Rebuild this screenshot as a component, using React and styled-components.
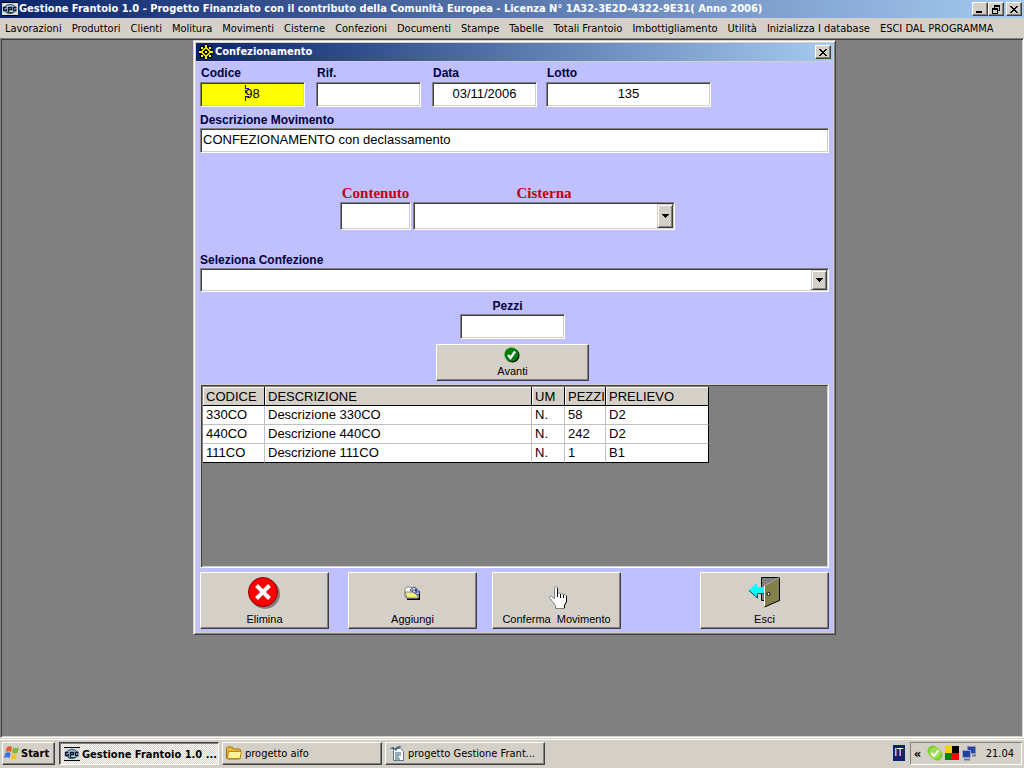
import React from 'react';
import styled, { createGlobalStyle } from 'styled-components';

const GlobalStyle = createGlobalStyle`
    * {
        box-sizing: border-box;
    }
    body {
        margin: 0;
        background: #808080;
        color: #000;
        font-family: 'DejaVu Sans Condensed', 'DejaVu Sans', sans-serif;
        font-size: 11px;
    }
    button, input, select {
        margin: 0;
        padding: 0;
        border-radius: 0;
        color: inherit;
        font: inherit;
    }
    svg {
        display: block;
        flex: none;
    }
`;

const Screen = styled.div`
    display: flex;
    flex-direction: column;
    min-height: 100vh;
`;

const TitleBar = styled.header`
    display: flex;
    align-items: center;
    gap: 1px;
    height: 18px;
    padding: 0 2px;
    background: linear-gradient(to right, #0a246a, #a6caf0);
    color: #fff;
`;

const TitleText = styled.h1`
    flex: 1;
    min-width: 0;
    margin: 0;
    overflow: hidden;
    font-size: 11px;
    font-weight: bold;
    line-height: 16px;
    white-space: nowrap;
`;

const CaptionButtons = styled.div`
    display: flex;
    button:last-child {
        margin-left: 2px;
    }
`;

const CaptionButton = styled.button`
    display: flex;
    align-items: center;
    justify-content: center;
    width: 16px;
    height: 14px;
    border: 1px solid;
    border-color: #fff #404040 #404040 #fff;
    background: #d4d0c8;
    box-shadow: inset -1px -1px #808080;
`;

const MenuBar = styled.nav`
    display: flex;
    align-items: center;
    gap: 10px;
    height: 20px;
    padding: 1px 5px 0;
    background: #d4d0c8;
    a {
        color: #000;
        line-height: 16px;
        text-decoration: none;
        white-space: nowrap;
    }
`;

const Workspace = styled.main`
    flex: 1;
    border: 1px solid;
    border-color: #808080 #fff #fff #808080;
    box-shadow: inset 1px 1px #404040, inset -1px -1px #d4d0c8;
    padding: 1px;
    background: #808080;
`;

const Dialog = styled.section`
    width: 643px;
    max-width: 100%;
    margin-left: 191px;
    padding: 2px;
    border: 1px solid;
    border-color: #d4d0c8 #404040 #404040 #d4d0c8;
    box-shadow: inset 1px 1px #fff, inset -1px -1px #808080;
    background: #d4d0c8;
`;

const Form = styled.form`
    display: flex;
    flex-direction: column;
    margin-top: 1px;
    padding: 4px 4px 3px;
    background: #c0c0ff;
    font-family: 'Liberation Sans', Arial, sans-serif;
`;

const FieldRow = styled.div`
    display: grid;
    grid-template-columns: 116px 116px 114px 165px;
`;

const Field = styled.div`
    display: flex;
    flex-direction: column;
    gap: ${props => (props.$small ? '2px' : '1px')};
    width: ${props => (props.$small ? '105px' : 'auto')};
    margin-top: ${props => props.$space || 0}px;
`;

const Label = styled.label`
    padding-left: ${props => (props.$indent ? '1px' : 0)};
    color: #000040;
    font-size: 12px;
    font-weight: bold;
    line-height: 14px;
`;

const sunken = `
    border: 1px solid;
    border-color: #808080 #fff #fff #808080;
    box-shadow: inset 1px 1px #404040, inset -1px -1px #d4d0c8;
`;

const TextBox = styled.input`
    ${sunken}
    width: 100%;
    height: ${props => props.$height || 25}px;
    padding: 0 2px 2px;
    background: ${props => (props.$active ? '#ffff00' : '#fff')};
    font-size: 13px;
    text-align: ${props => (props.$center ? 'center' : 'left')};
    outline: none;
`;

const LotField = styled(Field)`
    gap: 2px;
`;

const CaretBox = styled.div`
    position: relative;
    svg {
        position: absolute;
        left: 45px;
        top: 3px;
    }
`;

const Combo = styled.div`
    ${sunken}
    display: flex;
    height: ${props => props.$height}px;
    padding: 1px;
    background: #fff;
`;

const ComboSelect = styled.select`
    flex: 1;
    min-width: 0;
    border: 0;
    background: transparent;
    font-size: 13px;
    appearance: none;
    outline: none;
`;

const ComboArrow = styled.span`
    display: flex;
    align-items: center;
    justify-content: center;
    width: 16px;
    border: 1px solid;
    border-color: #d4d0c8 #404040 #404040 #d4d0c8;
    background: #d4d0c8;
    box-shadow: inset 1px 1px #fff, inset -1px -1px #808080;
`;

const SourceRow = styled.div`
    display: grid;
    grid-template-columns: 71px 262px;
    justify-content: center;
    column-gap: 2px;
    margin: 31px 0 23px;
    padding-right: 14px;
`;

const SourceLabel = styled.label`
    display: block;
    color: #c00010;
    font-family: 'Liberation Serif', 'Times New Roman', serif;
    font-size: 15px;
    font-weight: bold;
    line-height: 18px;
    text-align: center;
`;

const Pieces = styled.div`
    display: flex;
    flex-direction: column;
    align-items: center;
    gap: 5px;
    margin: 7px 0 3px;
    padding-right: 4px;
`;

const PiecesField = styled(Field)`
    width: 105px;
    label {
        padding-right: 10px;
        text-align: center;
    }
`;

const PushButton = styled.button`
    display: flex;
    flex-direction: column;
    align-items: center;
    justify-content: center;
    gap: ${props => (props.$wide ? '1px' : '2px')};
    width: ${props => (props.$wide ? '153px' : '129px')};
    height: ${props => (props.$wide ? '37px' : '57px')};
    border: 1px solid;
    border-color: #fff #404040 #404040 #fff;
    background: #d4d0c8;
    box-shadow: inset -1px -1px #808080;
    font-size: 11px;
    line-height: 14px;
    white-space: pre;
`;

const GridPanel = styled.div`
    height: 184px;
    padding: 1px;
    border: 1px solid;
    border-color: #d4d0c8 #fff #fff #d4d0c8;
    background: #808080;
    box-shadow: inset 1px 1px #404040, inset -1px -1px #d4d0c8;
    overflow: hidden;
`;

const DataTable = styled.table`
    width: 506px;
    margin: 1px;
    border-collapse: separate;
    border-spacing: 0;
    table-layout: fixed;
    font-size: 13px;
    line-height: 16px;
    th, td {
        height: 19px;
        padding: 1px 0 1px 3px;
        border-right: 1px solid #c0c0c0;
        border-bottom: 1px solid #c0c0c0;
        background: #fff;
        font-weight: normal;
        overflow: hidden;
        text-align: left;
        white-space: nowrap;
    }
    th {
        padding: 2px 0 0 3px;
        border-color: #000;
        background: #d4d0c8;
        box-shadow: inset 1px 1px #fff;
    }
    td:last-child {
        border-right-color: #000;
    }
    tr:last-child td {
        border-bottom-color: #000;
    }
`;

const Actions = styled.div`
    display: grid;
    grid-template-columns: 148px 144px 129px 1fr;
    margin-top: 4px;
    button:last-child {
        justify-self: end;
    }
`;

const Taskbar = styled.footer`
    display: flex;
    align-items: center;
    gap: 3px;
    height: 30px;
    padding: 2px 2px 3px;
    border-top: 1px solid #d4d0c8;
    background: #d4d0c8;
    box-shadow: inset 0 1px #fff;
`;

const TaskButton = styled.button`
    display: flex;
    align-items: center;
    gap: ${props => (props.$active ? '2px' : '3px')};
    flex: 0 1 160px;
    min-width: 0;
    height: 23px;
    padding: ${props => (props.$active ? '2px 0 0 4px' : '0 3px')};
    border: 1px solid;
    border-color: ${props => (props.$active ? '#404040 #fff #fff #404040' : '#fff #404040 #404040 #fff')};
    background: ${props => (props.$active ? 'repeating-conic-gradient(#fff 0 25%, #d4d0c8 0 50%) 0 0 / 2px 2px' : '#d4d0c8')};
    box-shadow: ${props => (props.$active ? 'inset 1px 1px #808080' : 'inset -1px -1px #808080')};
    font-weight: ${props => (props.$active ? 'bold' : 'normal')};
    text-align: left;
    white-space: nowrap;
`;

const StartButton = styled(TaskButton)`
    flex: none;
    gap: 1px;
    width: 53px;
    margin-right: 1px;
    padding: 0 1px;
    font-weight: bold;
`;

const Language = styled.span`
    width: 12px;
    margin: 0 2px 0 auto;
    background: #0a246a;
    color: #fff;
    line-height: 16px;
    text-align: center;
`;

const Tray = styled.div`
    display: flex;
    align-items: center;
    gap: 2px;
    height: 23px;
    padding: 0 7px 0 3px;
    border: 1px solid;
    border-color: #808080 #fff #fff #808080;
    time {
        margin-left: 7px;
    }
`;

const Chevrons = styled.span`
    width: 11px;
    font-size: 13px;
    font-weight: bold;
`;

const menus = [
    'Lavorazioni',
    'Produttori',
    'Clienti',
    'Molitura',
    'Movimenti',
    'Cisterne',
    'Confezioni',
    'Documenti',
    'Stampe',
    'Tabelle',
    'Totali Frantoio',
    'Imbottigliamento',
    'Utilità',
    'Inizializza I database',
    'ESCI DAL PROGRAMMA',
];

const columns = [
    { name: 'CODICE', width: 62 },
    { name: 'DESCRIZIONE', width: 267 },
    { name: 'UM', width: 33 },
    { name: 'PEZZI', width: 41 },
    { name: 'PRELIEVO', width: 103 },
];

const rows = [
    ['330CO', 'Descrizione 330CO', 'N.', '58', 'D2'],
    ['440CO', 'Descrizione 440CO', 'N.', '242', 'D2'],
    ['111CO', 'Descrizione 111CO', 'N.', '1', 'B1'],
];

const AppIcon = () => (
    <svg width='16' height='16' viewBox='0 0 16 16'>
        <path d='M0 2h16v12H0z' fill='#dcdcd8' />
        <path d='M0 1h16v1H0zM0 14h16v1H0z' fill='#000' />
        <ellipse cx='8' cy='8' rx='6' ry='4.500' fill='#a8c8d0' stroke='#1c4c90' />
        <path d='M4.500 6.500h-3v3h3V8M6.500 11V6.500h3v2h-3M14.500 6.500h-3v3h3' stroke='#101830' strokeWidth='1.300' fill='none' />
        <path d='M5 11.500h6' stroke='#305020' fill='none' />
    </svg>
);

const FormIcon = () => (
    <svg width='16' height='16' viewBox='0 0 16 16'>
        <path d='M8 0l3 2h3v3l2 3-2 3v3h-3l-3 2-3-2H2v-3L0 8l2-3V2h3z' fill='#000' />
        <path d='M8 3.500L12.500 8 8 12.500 3.500 8z' fill='none' stroke='#ffff00' strokeWidth='1.500' />
        <path
            d='M7 1h2v2H7zM7 13h2v2H7zM1 7h2v2H1zM13 7h2v2h-2zM3 3h2v2H3zM11 3h2v2h-2zM3 11h2v2H3zM11 11h2v2h-2zM7 7h2v2H7z'
            fill='#ffff00'
        />
    </svg>
);

const CloseGlyph = () => (
    <svg width='8' height='7' viewBox='0 0 8 7' shapeRendering='crispEdges'>
        <path d='M0 0h2v1h1v1h2V1h1V0h2v1H7v1H6v1H5v1h1v1h1v1h1v1H6V6H5V5H3v1H2v1H0V6h1V5h1V4h1V3H2V2H1V1H0z' />
    </svg>
);

const MinimizeGlyph = () => (
    <svg width='8' height='8' viewBox='0 0 8 8'>
        <path d='M0 6h6v2H0z' />
    </svg>
);

const RestoreGlyph = () => (
    <svg width='9' height='9' viewBox='0 0 9 9' shapeRendering='crispEdges'>
        <path d='M2 0h6v6H6V5h1V2H3v1H2zM0 3h6v6H0zM1 5v3h4V5z' fillRule='evenodd' />
    </svg>
);

const DownGlyph = () => (
    <svg width='7' height='4' viewBox='0 0 7 4' shapeRendering='crispEdges'>
        <path d='M0 0h7v1H6v1H5v1H4v1H3V3H2V2H1V1H0z' />
    </svg>
);

const CheckIcon = () => (
    <svg width='17' height='16' viewBox='0 0 17 16'>
        <circle cx='8.500' cy='8.500' r='7' fill='#000' />
        <circle cx='7.500' cy='7.500' r='7' fill='#008000' />
        <path d='M4 8l2.500 3L11 4.500' fill='none' stroke='#fff' strokeWidth='2.400' />
    </svg>
);

const DeleteIcon = () => (
    <svg width='34' height='34' viewBox='1 0 34 34'>
        <circle cx='18' cy='18' r='15' fill='#808080' />
        <circle cx='16' cy='16' r='14.500' fill='#ff0000' stroke='#800000' />
        <path d='M9.500 9.500l13 13M22.500 9.500l-13 13' stroke='#fff' strokeWidth='4' />
    </svg>
);

const FolderIcon = () => (
    <svg width='34' height='34' viewBox='1 0 34 34'>
        <path d='M12 22h12v-7h1v9H12z' fill='#000' />
        <path d='M10 13l2-2h4l1 1h4l2 3v7H11l-1-2z' fill='#fff' stroke='#808080' />
        <path d='M10 16h11l2 6H12z' fill='#f4f080' stroke='#808080' />
        <path d='M15 14l4-3 6 5-2 3z' fill='#fff' stroke='#404040' />
        <path d='M17 14h4v3M21 13v3h3' stroke='#0020c0' fill='none' />
    </svg>
);

const HandIcon = () => (
    <svg width='34' height='34' viewBox='1 0 34 34'>
        <path
            d='M15.500 11.500q1.500-2 3 0v6q1.500-1.500 3 0.500 1.500-1 3 0.500 1.500-0.500 3 1v6l-2 4v3h-9v-3l-3-4-3-4q0-2.500 3-0.500l2 2z'
            fill='#fff'
            stroke='#808080'
        />
        <path d='M18.500 12v9M21.500 18v4M24.500 19v3M27.500 20v6l-2 3v3' stroke='#000' fill='none' />
    </svg>
);

const DoorIcon = () => (
    <svg width='34' height='34' viewBox='1 -1 34 34'>
        <path d='M14.500 0.500h18v23h-18z' fill='#808080' stroke='#000' />
        <path d='M17.500 8.500l15-8v23l-15 6.500z' fill='#84804c' stroke='#000' />
        <path d='M17.500 8.500l15-8' stroke='#d4d0c8' />
        <path d='M17.500 8.500v21' stroke='#fff' />
        <path d='M17 10h-7V6l-8.500 7.500L10 21v-5h7z' fill='#00ffff' />
        <path d='M17 16.500h-6.500V21L2 13.500' fill='none' stroke='#004040' />
        <circle cx='21.500' cy='17' r='1.500' fill='#fff' stroke='#000' />
    </svg>
);

const WindowsIcon = () => (
    <svg width='16' height='16' viewBox='0 0 16 16'>
        <path d='M3 2q3-1.500 5 0L7 7Q5 5.500 1.500 7z' fill='#e8562a' />
        <path d='M9 2.500q3 1.500 6 0L13.500 8Q11 9 8 7.500z' fill='#7cb83c' />
        <path d='M1.300 8q3-1.500 5.400 0L5.500 13Q3 11.500 0 13z' fill='#3c70d8' />
        <path d='M7.700 8.500q3 1.500 5.500 0.500L12 14q-3 1-5.500-0.500z' fill='#f6c430' />
    </svg>
);

const DirectoryIcon = () => (
    <svg width='16' height='16' viewBox='0 0 16 16'>
        <path d='M0.500 3.500l1-1.500h4.500l1.500 2h6l1 1v8l-1 1h-12l-1-1z' fill='#e8b830' stroke='#a07010' />
        <path d='M2.500 6.500h13L14 13.500H1.500z' fill='#fff09a' stroke='#b88818' />
    </svg>
);

const WriterIcon = () => (
    <svg width='16' height='16' viewBox='0 0 16 16'>
        <path d='M4.500 3.500h7l3 3v9h-10z' fill='#fff' stroke='#58788c' />
        <path d='M6 8h6M6 10h6M6 12h4M6 14h5' stroke='#2c5870' />
        <path d='M1 4q3-4 5 0 3-5 7-2-4 0-6 4Q5 3 1 4z' fill='#386880' />
    </svg>
);

const MessengerIcon = () => (
    <svg width='16' height='16' viewBox='0 0 16 16'>
        <circle cx='6' cy='6' r='5.500' fill='#7ccc28' />
        <circle cx='10' cy='10' r='5.500' fill='#7ccc28' />
        <circle cx='8' cy='8' r='6' fill='#98dc50' />
        <path d='M4.500 8l2.500 3 4.500-5.500' stroke='#fff' strokeWidth='2' fill='none' />
    </svg>
);

const SquaresIcon = () => (
    <svg width='14' height='14' viewBox='0 0 14 14'>
        <path d='M0 0h7v7H0z' fill='#f8d000' />
        <path d='M7 0h7v7H7z' fill='#000' />
        <path d='M0 7h7v7H0z' fill='#008000' />
        <path d='M7 7h7v7H7z' fill='#ff0000' />
    </svg>
);

const NetworkIcon = () => (
    <svg width='16' height='16' viewBox='0 0 16 16'>
        <path d='M6.500 1.500h8v7h-8z' fill='#2848a8' stroke='#8890b8' />
        <path d='M1.500 5.500h8v7h-8z' fill='#2040a0' stroke='#a0a8c8' />
        <path d='M3 14.500h6M11 10.500h4' stroke='#70789c' strokeWidth='2' />
    </svg>
);

const App = () => {
    return (
        <>
            <GlobalStyle />
            <Screen>
                <TitleBar>
                    <AppIcon />
                    <TitleText>
                        Gestione Frantoio 1.0 - Progetto Finanziato con il contributo della Comunità Europea - Licenza N°
                        1A32-3E2D-4322-9E31( Anno 2006)
                    </TitleText>
                    <CaptionButtons>
                        <CaptionButton aria-label='Riduci a icona'>
                            <MinimizeGlyph />
                        </CaptionButton>
                        <CaptionButton aria-label='Ripristina'>
                            <RestoreGlyph />
                        </CaptionButton>
                        <CaptionButton aria-label='Chiudi'>
                            <CloseGlyph />
                        </CaptionButton>
                    </CaptionButtons>
                </TitleBar>
                <MenuBar>
                    {menus.map(name => (
                        <a href='#' key={name}>
                            {name}
                        </a>
                    ))}
                </MenuBar>
                <Workspace>
                    <Dialog>
                        <TitleBar>
                            <FormIcon />
                            <TitleText as='h2'>Confezionamento</TitleText>
                            <CaptionButton aria-label='Chiudi finestra'>
                                <CloseGlyph />
                            </CaptionButton>
                        </TitleBar>
                        <Form onSubmit={e => e.preventDefault()}>
                            <FieldRow>
                                <Field $small>
                                    <Label $indent htmlFor='codice'>Codice</Label>
                                    <CaretBox>
                                        <TextBox id='codice' $active $center defaultValue='98' />
                                        <svg width='6' height='16' viewBox='0 0 6 16' shapeRendering='crispEdges'>
                                            <path d='M0 0h1v3h3v1H0zM0 5h1v3H0zM0 11h4v1H1v4H0z' fill='#0000c0' />
                                        </svg>
                                    </CaretBox>
                                </Field>
                                <Field $small>
                                    <Label $indent htmlFor='rif'>Rif.</Label>
                                    <TextBox id='rif' $center />
                                </Field>
                                <Field $small>
                                    <Label $indent htmlFor='data'>Data</Label>
                                    <TextBox id='data' $center defaultValue='03/11/2006' />
                                </Field>
                                <LotField>
                                    <Label $indent htmlFor='lotto'>Lotto</Label>
                                    <TextBox id='lotto' $center defaultValue='135' />
                                </LotField>
                            </FieldRow>
                            <Field $space={6}>
                                <Label htmlFor='descrizione'>Descrizione Movimento</Label>
                                <TextBox id='descrizione' defaultValue='CONFEZIONAMENTO con declassamento' />
                            </Field>
                            <SourceRow>
                                <div>
                                    <SourceLabel htmlFor='contenuto'>Contenuto</SourceLabel>
                                    <TextBox id='contenuto' $height={28} />
                                </div>
                                <div>
                                    <SourceLabel htmlFor='cisterna'>Cisterna</SourceLabel>
                                    <Combo $height={28}>
                                        <ComboSelect id='cisterna' />
                                        <ComboArrow>
                                            <DownGlyph />
                                        </ComboArrow>
                                    </Combo>
                                </div>
                            </SourceRow>
                            <Field>
                                <Label htmlFor='confezione'>Seleziona Confezione</Label>
                                <Combo $height={24}>
                                    <ComboSelect id='confezione' />
                                    <ComboArrow>
                                        <DownGlyph />
                                    </ComboArrow>
                                </Combo>
                            </Field>
                            <Pieces>
                                <PiecesField>
                                    <Label htmlFor='pezzi'>Pezzi</Label>
                                    <TextBox id='pezzi' $center />
                                </PiecesField>
                                <PushButton type='button' $wide>
                                    <CheckIcon />
                                    Avanti
                                </PushButton>
                            </Pieces>
                            <GridPanel>
                                <DataTable>
                                    <colgroup>
                                        {columns.map(col => (
                                            <col key={col.name} width={col.width} />
                                        ))}
                                    </colgroup>
                                    <thead>
                                        <tr>
                                            {columns.map(col => (
                                                <th key={col.name}>{col.name}</th>
                                            ))}
                                        </tr>
                                    </thead>
                                    <tbody>
                                        {rows.map(row => (
                                            <tr key={row[0]}>
                                                {row.map((cell, i) => (
                                                    <td key={i}>{cell}</td>
                                                ))}
                                            </tr>
                                        ))}
                                    </tbody>
                                </DataTable>
                            </GridPanel>
                            <Actions>
                                <PushButton type='button'>
                                    <DeleteIcon />
                                    Elimina
                                </PushButton>
                                <PushButton type='button'>
                                    <FolderIcon />
                                    Aggiungi
                                </PushButton>
                                <PushButton type='button'>
                                    <HandIcon />
                                    {'Conferma  Movimento'}
                                </PushButton>
                                <PushButton type='button'>
                                    <DoorIcon />
                                    Esci
                                </PushButton>
                            </Actions>
                        </Form>
                    </Dialog>
                </Workspace>
                <Taskbar>
                    <StartButton>
                        <WindowsIcon />
                        <span>Start</span>
                    </StartButton>
                    <TaskButton $active>
                        <AppIcon />
                        <span>Gestione Frantoio 1.0 ...</span>
                    </TaskButton>
                    <TaskButton>
                        <DirectoryIcon />
                        <span>progetto aifo</span>
                    </TaskButton>
                    <TaskButton>
                        <WriterIcon />
                        <span>progetto Gestione Frant...</span>
                    </TaskButton>
                    <Language>IT</Language>
                    <Tray>
                        <Chevrons>«</Chevrons>
                        <MessengerIcon />
                        <SquaresIcon />
                        <NetworkIcon />
                        <time>21.04</time>
                    </Tray>
                </Taskbar>
            </Screen>
        </>
    );
};

export default App;
